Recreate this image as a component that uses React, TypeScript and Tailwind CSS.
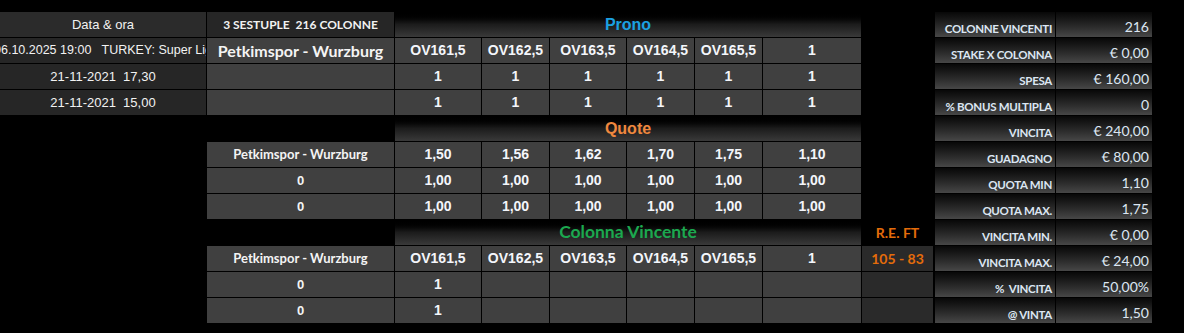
import clsx from "clsx";

const ARIAL = "font-['Liberation_Sans',Arial,sans-serif]";
const CALIBRI = "font-['Lato','Open_Sans',sans-serif]";

type CellProps = {
  text?: string;
  kind?: "date" | "dateHead" | "grid" | "dark" | "black" | "head";
  font?: string;
  span?: boolean;
};

function Cell({ text = "", kind = "grid", font = "", span = false }: CellProps) {
  return (
    <div
      className={clsx(
        "flex items-center justify-center overflow-hidden whitespace-pre border-r border-b border-black",
        span && "col-span-6",
        kind === "grid" && "bg-[#404040]",
        kind === "date" && "bg-[#262626]",
        kind === "dateHead" && "bg-[#2b2b2b]",
        kind === "dark" && "bg-[#2a2a2a]",
        kind === "black" && "bg-black",
        kind === "head" && "bg-linear-to-b from-black via-[#1c1c1c] to-[#3a3a3a]",
        font,
      )}
    >
      {text}
    </div>
  );
}

const num = `${ARIAL} text-[14px] font-bold text-[#f4f6fb]`;
const team = `${CALIBRI} text-[13px] font-bold text-[#f4f4f4]`;
const zero = `${ARIAL} text-[13px] font-bold text-[#f4f4f4]`;
const date = `${ARIAL} text-[13px] text-[#f2f2f2]`;
const orange = `${CALIBRI} text-[14px] font-bold text-[#e46c0a]`;

const ovs = ["OV161,5", "OV162,5", "OV163,5", "OV164,5", "OV165,5", "1"];
const quotes = ["1,50", "1,56", "1,62", "1,70", "1,75", "1,10"];
const ones = ["1", "1", "1", "1", "1", "1"];
const evens = ["1,00", "1,00", "1,00", "1,00", "1,00", "1,00"];

const summary = [
  ["COLONNE VINCENTI", "216"],
  ["STAKE X COLONNA", "€ 0,00"],
  ["SPESA", "€ 160,00"],
  ["% BONUS MULTIPLA", "0"],
  ["VINCITA", "€ 240,00"],
  ["GUADAGNO", "€ 80,00"],
  ["QUOTA MIN", "1,10"],
  ["QUOTA MAX.", "1,75"],
  ["VINCITA MIN.", "€ 0,00"],
  ["VINCITA MAX.", "€ 24,00"],
  ["%  VINCITA", "50,00%"],
  ["@ VINTA", "1,50"],
];

function Values({ items }: { items: string[] }) {
  return (
    <>
      {items.map((v, i) => (
        <Cell key={i} text={v} font={num} />
      ))}
    </>
  );
}

export default function App() {
  return (
    <div className="flex h-[333px] w-[1184px] bg-black pt-[12px]">
      <div className="grid grid-cols-[207px_188px_87px_68px_77px_68px_68px_99px_72px] grid-rows-[repeat(12,26px)]">
        {/* Prono */}
        <Cell text="Data & ora" kind="dateHead" font={date} />
        <Cell text="3 SESTUPLE  216 COLONNE" kind="date" font={`${CALIBRI} text-[12px] font-bold text-[#f2f2f2]`} />
        <Cell text="Prono" kind="head" span font={`${ARIAL} text-[16px] font-bold text-[#1ba1e2]`} />
        <Cell kind="black" />

        <Cell text="06.10.2025 19:00   TURKEY: Super Lig" kind="date" font={`${ARIAL} text-[12.5px] text-[#f2f2f2]`} />
        <Cell text="Petkimspor - Wurzburg" font={`${CALIBRI} text-[16px] font-bold text-[#f4f4f4]`} />
        <Values items={ovs} />
        <Cell kind="black" />

        <Cell text="21-11-2021  17,30" kind="date" font={date} />
        <Cell />
        <Values items={ones} />
        <Cell kind="black" />

        <Cell text="21-11-2021  15,00" kind="date" font={date} />
        <Cell />
        <Values items={ones} />
        <Cell kind="black" />

        {/* Quote */}
        <Cell kind="black" />
        <Cell kind="black" />
        <Cell text="Quote" kind="head" span font={`${ARIAL} text-[16px] font-bold text-[#f0883e]`} />
        <Cell kind="black" />

        <Cell kind="black" />
        <Cell text="Petkimspor - Wurzburg" font={team} />
        <Values items={quotes} />
        <Cell kind="black" />

        <Cell kind="black" />
        <Cell text="0" font={zero} />
        <Values items={evens} />
        <Cell kind="black" />

        <Cell kind="black" />
        <Cell text="0" font={zero} />
        <Values items={evens} />
        <Cell kind="black" />

        {/* Colonna Vincente */}
        <Cell kind="black" />
        <Cell kind="black" />
        <Cell text="Colonna Vincente" kind="head" span font={`${CALIBRI} text-[17.5px] font-bold text-[#1ca84f]`} />
        <Cell text="R.E. FT" kind="black" font={orange} />

        <Cell kind="black" />
        <Cell text="Petkimspor - Wurzburg" font={team} />
        <Values items={ovs} />
        <Cell text="105 - 83" kind="dark" font={orange} />

        <Cell kind="black" />
        <Cell text="0" font={zero} />
        <Values items={["1", "", "", "", "", ""]} />
        <Cell kind="dark" />

        <Cell kind="black" />
        <Cell text="0" font={zero} />
        <Values items={["1", "", "", "", "", ""]} />
        <Cell kind="dark" />
      </div>

      <div className="ml-px grid h-[312px] w-[217px] grid-cols-[121px_96px] grid-rows-[repeat(12,26px)]">
        {summary.map(([label, value]) => (
          <div key={label} className="contents">
            <div className={`flex items-end justify-end whitespace-pre border-r border-b border-black bg-linear-to-b from-[#080808] to-[#474747] pr-[3px] pb-[3px] leading-none ${CALIBRI} text-[11.5px] font-bold tracking-[-0.3px] text-[#dce6f2]`}>
              {label}
            </div>
            <div className={`flex items-end justify-end whitespace-pre border-b border-black bg-linear-to-b from-[#080808] to-[#474747] pr-[3px] pb-[3px] leading-none ${CALIBRI} text-[14px] text-[#dce6f2]`}>
              {value}
            </div>
          </div>
        ))}
      </div>
    </div>
  );
}
